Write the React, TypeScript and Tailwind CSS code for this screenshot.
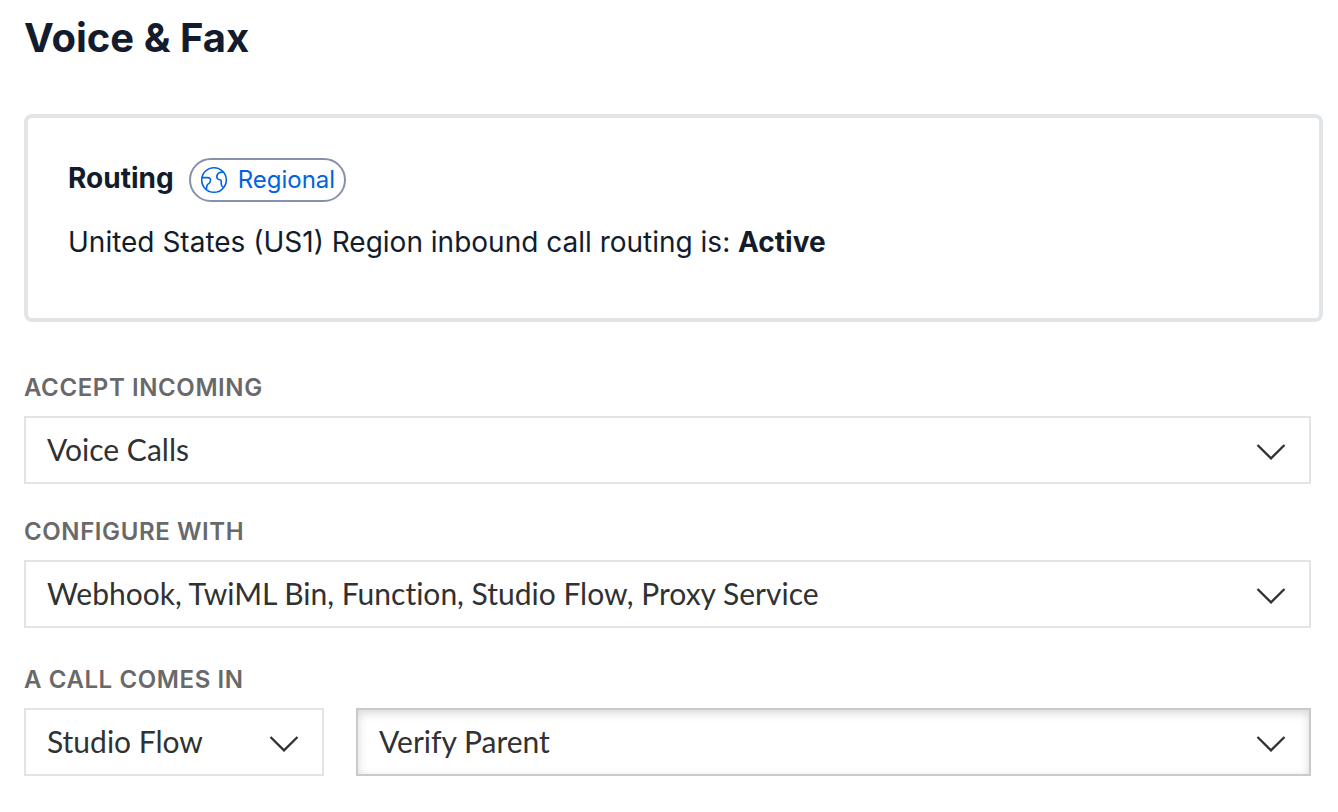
import type { ReactNode } from "react";

interface SelectProps {
  id: string;
  options: string[];
  label?: string;
  focused?: boolean;
}

const INCOMING = ["Voice Calls", "Fax"];
const CONFIGURE = [
  "Webhook, TwiML Bin, Function, Studio Flow, Proxy Service",
  "SIP Trunk",
];
const HANDLERS = ["Studio Flow", "Webhook", "TwiML Bin", "Function"];
const FLOWS = ["Verify Parent"];

function Select({ id, options, label, focused }: SelectProps) {
  return (
    <div className="relative">
      <select
        id={id}
        aria-label={label}
        className={
          "block h-[68px] w-full appearance-none rounded-none border-2 bg-white pr-16 pb-[2px] pl-[21px] font-['Lato',sans-serif] text-[30px] text-[#303133] outline-none [font-variant-ligatures:none] " +
          (focused
            ? "border-[#cacaca] shadow-[inset_0_3px_10px_rgba(0,0,0,0.16)]"
            : "border-[#e4e4e4]")
        }
      >
        {options.map((o) => (
          <option key={o}>{o}</option>
        ))}
      </select>
      <svg
        className="pointer-events-none absolute top-7 right-6 h-4 w-8"
        viewBox="0 0 32 16"
        fill="none"
        stroke="#303133"
        strokeWidth="2.3"
        aria-hidden="true"
      >
        <path d="M2.5 1 16 14.4 29.5 1" />
      </svg>
    </div>
  );
}

function FieldLabel({ htmlFor, children }: { htmlFor: string; children: ReactNode }) {
  return (
    <label
      htmlFor={htmlFor}
      className="mb-[14px] block text-2xl leading-7 font-semibold tracking-wide text-[#696969] uppercase"
    >
      {children}
    </label>
  );
}

function GlobeIcon() {
  return (
    <svg
      className="size-7"
      viewBox="0 0 28 28"
      fill="none"
      stroke="currentColor"
      strokeWidth="1.6"
      strokeLinejoin="round"
      strokeLinecap="round"
      aria-hidden="true"
    >
      <circle cx="14" cy="14" r="12.3" />
      <path d="M2.2 11.6H7.6c2 0 3.200 1.100 2.900 2.700l-.3 1.400c-.2 1-.7 1.500-1.500 1.900-1.200.6-1.700 1.200-1.800 2.200l-.6 3.700" />
      <path d="M23 6.200c-2.300-.2-4 .1-5.100 1.500-1.200 1.500-1.400 3.300-.6 4.600.6 1 1.500 1.400 2.600 1.400.9 0 1.300.5 1.300 1.500v2.300c0 1.800.6 3.100 2 3.900" />
    </svg>
  );
}

export default function App() {
  return (
    <main className="min-h-screen bg-white pt-[14px] pb-9 pl-6 font-['Inter',sans-serif] text-[#121c2d]">
      <h1 className="text-[40px] leading-[48px] font-bold">Voice &amp; Fax</h1>

      {/* Routing card */}
      <section className="mt-[52px] mr-[15px] rounded-lg border-4 border-[#e1e5e8] px-10 pt-10 pb-14">
        <div className="flex items-start gap-[15px]">
          <h2 className="text-[28px] leading-10 font-bold">Routing</h2>
          <a
            href="#regional"
            className="flex h-11 items-center gap-[10px] rounded-full border-2 border-[#8891aa] px-[9px] text-2xl text-[#0263e0]"
          >
            <GlobeIcon />
            Regional
          </a>
        </div>
        <p className="mt-5 text-[28px] leading-10">
          United States (US1) Region inbound call routing is:{" "}
          <strong className="font-bold">Active</strong>
        </p>
      </section>

      {/* Voice configuration */}
      <form className="mt-[52px] mr-[27px]">
        <FieldLabel htmlFor="incoming">Accept Incoming</FieldLabel>
        <Select id="incoming" options={INCOMING} />

        <div className="mt-[34px]">
          <FieldLabel htmlFor="configure">Configure With</FieldLabel>
          <Select id="configure" options={CONFIGURE} />
        </div>

        <div className="mt-[38px]">
          <FieldLabel htmlFor="handler">A Call Comes In</FieldLabel>
          <div className="grid grid-cols-[300px_1fr] gap-8">
            <Select id="handler" options={HANDLERS} />
            <Select id="flow" label="Studio Flow to run" options={FLOWS} focused />
          </div>
        </div>
      </form>
    </main>
  );
}
